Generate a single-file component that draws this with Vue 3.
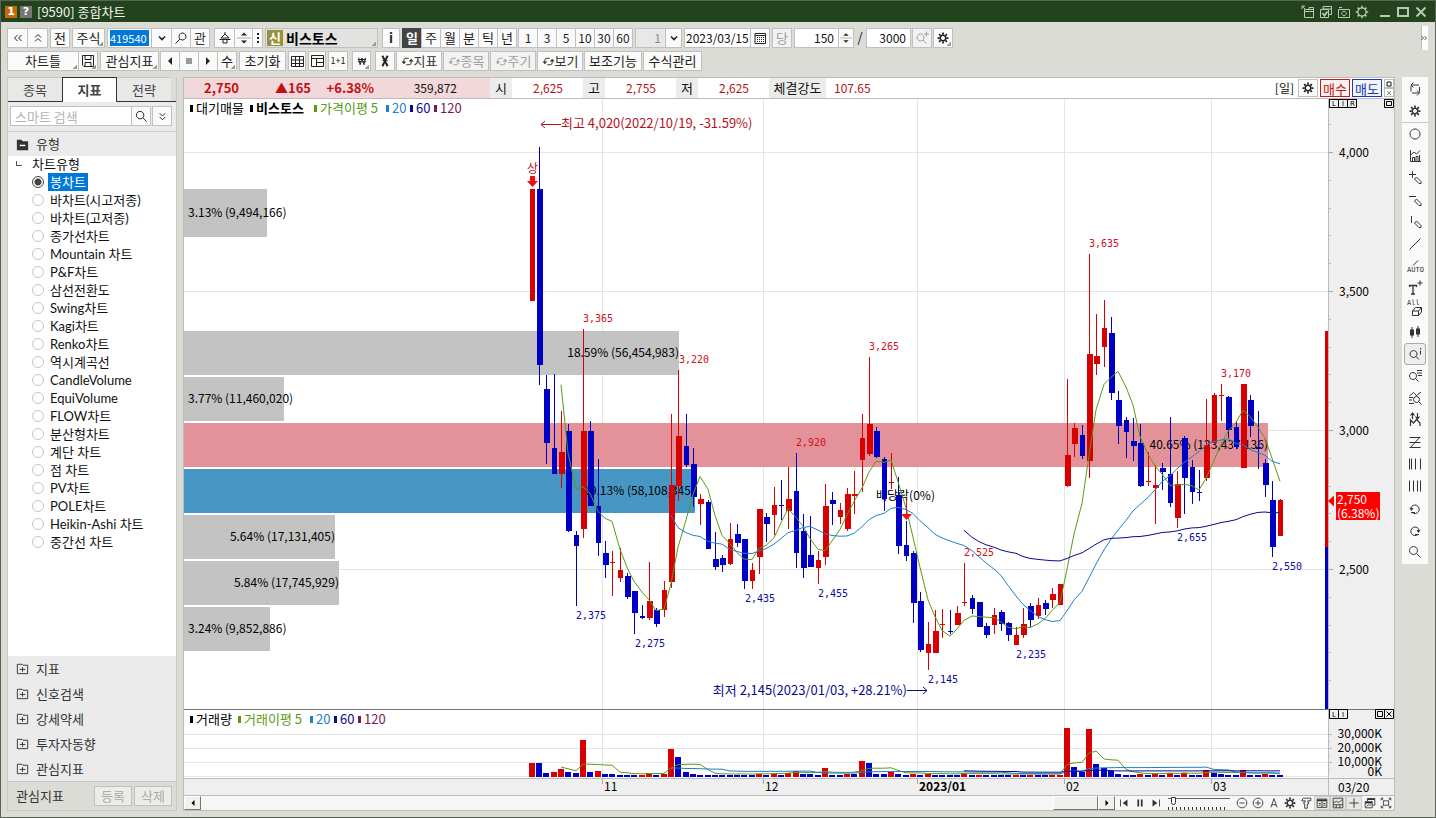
<script setup>
import { h, ref } from 'vue'

const gearTeeth = 'M8 1.8v2.4M8 11.8v2.4M1.8 8h2.4M11.8 8h2.4M3.6 3.6l1.7 1.7M10.7 10.7l1.7 1.7M3.6 12.4l1.7-1.7M10.7 5.3l1.7-1.7'
const gearRing = 'M8 4.8a3.2 3.2 0 1 0 .01 0z'

const shapes = {
  gear: [{ d: gearTeeth, w: 2 }, { d: gearRing, w: 1.8 }],
  thinGear: [{ d: gearTeeth, w: 1.6 }, { d: 'M8 3.8a4.2 4.2 0 1 0 .01 0z', w: 1.2 }],
  dblLeft: [{ d: 'M7.5 5L4.5 8l3 3M11.5 5l-3 3 3 3' }],
  dblUp: [{ d: 'M5 7.5l3-3 3 3M5 11.5l3-3 3 3' }],
  dblDown: [{ d: 'M5 4.5l3 3 3-3M5 8.5l3 3 3-3' }],
  dblRight: [{ d: 'M3.5 5.5L6 8l-2.500 2.500M7.500 5.500L10 8l-2.500 2.500' }],
  down: [{ d: 'M5 6.500l3 3 3-3', w: 1.6 }],
  find: [{ d: 'M9.500 3a3.500 3.500 0 1 0 .01 0zM7 9l-4.500 4.500' }],
  lens: [{ d: 'M6.500 2.500a4 4 0 1 0 .01 0zM9.500 9.500l4 4' }],
  lensPlus: [{ d: 'M6.500 4a3.500 3.500 0 1 0 .01 0zM9 10l3.500 3.500M10 4h5M12.500 1.500v5' }],
  lensInfo: [{ d: 'M6.500 4.500a3.500 3.500 0 1 0 .01 0zM9 10.500l3 3M13.500 4.500v4' }, { d: 'M13 2h1.200v1.200H13z', f: 1 }],
  lensList: [{ d: 'M6 4.500a3.500 3.500 0 1 0 .01 0zM8.500 10.500l3 3M10 2.500h5M10 5h5M11 7.500h4' }],
  hat: [{ d: 'M8 2v2M8 4L4 8h8L8 4M2.500 9.500h11M6 10v3h4v-3' }],
  upDown: [{ d: 'M1 8h14', w: 1, c: '#aaa' }, { d: 'M5 5.500h6L8 2.500zM5 10.500h6l-3 3z', f: 1 }],
  dots: [{ d: 'M7 3h2v2H7zM7 7h2v2H7zM7 11h2v2H7z', f: 1 }],
  calendar: [{ d: 'M3 3.500h10.500v10H3zM3 5.500h10.500' }, { d: 'M5 7.500h7M5 9.500h7M5 11.500h7', dash: '1 1' }],
  disk: [{ d: 'M2.500 2.500h11v11H4l-1.500-1.500zM5 2.500v4h6v-4M5 13.500v-4h6v4' }],
  left: [{ d: 'M10 4v8L6 8z', f: 1 }],
  right: [{ d: 'M6 4v8l4-4z', f: 1 }],
  stop: [{ d: 'M5 5h6v6H5z', f: 1, c: '#999' }],
  grid: [{ d: 'M2.500 3.500h12v10h-12zM2.500 7h12M2.500 10.500h12M6.500 3.500v10M10.500 3.500v10' }],
  panes: [{ d: 'M2.500 2.500h12v11h-12zM2.500 5.500h12M7.500 5.500v8M7.500 9.500h7' }],
  won: [{ d: 'M3.500 3.500L5.500 13 8 4l2.500 9 2-9.500M2.500 6h11M2.500 9h11', w: 1.3 }],
  shears: [{ d: 'M5 2l6 12M11 2L5 14', w: 2.2 }, { d: 'M5 7.500h6', w: 1 }],
  sync: [{ d: 'M3.500 9V6.500a2.500 2.500 0 0 1 2.500-2.500h3.500M12.500 7v2.500A2.500 2.500 0 0 1 10 12H6.500', w: 1.2 }, { d: 'M.5 8h6l-3 3.500zM9.500 8h6l-3-3.500z', f: 1 }],
  pop: [{ d: 'M4.500 5.500h9v8h-9zM4.500 7.500h9M2 2l4 4M2 5V2h3M9 5.500v-2h4.500v2' }],
  cards: [{ d: 'M2.500 5.500h8v8h-8zM5 5.500v-3h8.500v8H11M5.500 2.500h8M5 5h8' }, { d: 'M4.500 9l2 2.500 3-4', w: 1.800 }],
  camera: [{ d: 'M2.500 5.500h11v8h-11zM3 3.500h3M8 7.300a2.200 2.200 0 1 0 .01 0z' }],
  min: [{ d: 'M3 12h10', w: 2 }],
  max: [{ d: 'M3 4h10v8H3z', w: 2 }],
  close: [{ d: 'M3.500 3.500l9 9M12.500 3.500l-9 9', w: 2 }],
  rotate: [{ d: 'M4 10.500V5.500a1.500 1.500 0 0 1 1.500-1.500H12M6.500 1.500L4 4l2.500 2.500M12.500 6v4.500A1.500 1.500 0 0 1 11 12H5M10 9.500l2.500 2.500-2.500 2.500' }],
  circle: [{ d: 'M8 3a5 5 0 1 0 .01 0z' }],
  chart: [{ d: 'M3.500 2v11.500H14M3.500 7l3.500-3 2.500 2L13 2.500M5.500 13.500V9.500h2v4M9 13.500v-5h2v5M12.500 13.500V7' }],
  penPlus: [{ d: 'M5.500 1v7M2 4.500h7M7.500 9l2-2 4.500 4.500v2h-2z' }],
  penMinus: [{ d: 'M2 4.500h7M7.500 9l2-2 4.500 4.500v2h-2z' }],
  penBar: [{ d: 'M4.500 2v7M7.500 9l2-2 4.500 4.500v2h-2z' }],
  line: [{ d: 'M2.500 13.500l11-11' }],
  autoLine: [{ d: 'M6 7.500l5-5' }],
  textPlus: [{ d: 'M2 5.500h8M6 5.500V14M4 14h4M2.500 5v2M9.500 5v2', w: 1.300 }, { d: 'M10.500 3h5M13 .5v5' }],
  eraser: [{ d: 'M5.500 9l3-3.500h6l-3 3.500zM5.500 9v4.500h6V9M11.500 13.500l3-3.500V5.500' }],
  candles: [{ d: 'M3 5.500h4v6H3zM9 4.500h4v6H9z', f: 1 }, { d: 'M5 3v11M11 2v11' }],
  chartLens: [{ d: 'M2.500 6l4-3.500 3 3L14 2M2 7.500h4M2 10h3M2 13.500h5M9.500 6.500a3 3 0 1 0 .01 0zM11.500 11.500l3 3' }],
  zigzag: [{ d: 'M3.500 14V8l3 3 3-3.500 3.500 3.500V14M5.500 1v6M3.500 3.500l2-2.500 2 2.500M10.500 1v6M8.500 4.500l2 2.500 2-2.500', w: 1.200 }],
  zee: [{ d: 'M2.500 3.500h11M2.500 8.500h11M2.500 13.500h11M12.500 3.500l-9 10' }],
  bars: [{ d: 'M2.500 2.500v11M4.500 2.500v11M8.500 2.500v11M13.500 2.500v11' }],
  barsEven: [{ d: 'M2.500 2.500v11M6.500 2.500v11M10.500 2.500v11M13.500 2.500v11' }],
  undo: [{ d: 'M5 12.500a4.300 4.300 0 1 0-1.200-4.500M8 12.500H4' }, { d: 'M2.500 8h4l-2 3z', f: 1 }],
  redo: [{ d: 'M11 12.500a4.300 4.300 0 1 1 1.200-4.500M8 12.500h4' }, { d: 'M9.500 8h4l-2 3z', f: 1 }],
  first: [{ d: 'M4 4v8' }, { d: 'M12 4v8L6.500 8z', f: 1 }],
  pause: [{ d: 'M6 4v8M10 4v8', w: 2 }],
  last: [{ d: 'M12 4v8' }, { d: 'M4 4v8l5.500-4z', f: 1 }],
  zoomOut: [{ d: 'M8 2.500a5.500 5.500 0 1 0 .01 0zM5 8h6' }],
  zoomIn: [{ d: 'M8 2.500a5.500 5.500 0 1 0 .01 0zM5 8h6M8 5v6' }],
  compass: [{ d: 'M4.500 13L8 3l3.500 10M5.500 10h5' }],
  hammer: [{ d: 'M3 5.500l2-3h8.500v3H10V7h1v2H9.500v5h-3V9H5.500V7H7V5.500z' }],
  table: [{ d: 'M2.500 3.500h11v9.500h-11z' }, { d: 'M2.500 5h11', w: 2 }, { d: 'M8 5v8M4.500 8.500h2M9.500 8.500h2.500M4.500 10.500h2M9.500 10.500h2.500' }],
  tile: [{ d: 'M2.500 2.500h11v11h-11zM3 8l3-2 3 1.500L13 4M2.500 10h11M6 10v3.500M10 10v3.500' }],
  plus: [{ d: 'M8 2.500v11M2.500 8h11' }],
  stack: [{ d: 'M2.500 6.500h8v7h-8zM5 6V3h8.500v7.500H11' }, { d: 'M2.500 7.500h8M5 3.500h8.500', w: 2 }, { d: 'M4 12l2-2 1.500 1 2-1.500' }],
  fit: [{ d: 'M5 5.500h6v5H5zM2.500 5V2.500H5M11 2.500h2.500V5M13.500 11v2.500H11M5 13.500H2.500V11M3 3l2 2M13 3l-2 2M3 13l2-2M13 13l-2-2' }],
  folderOpen: [{ d: 'M2 3h5l1 1.500h6V14H2z', f: 1 }, { d: 'M5 9h6', w: 1.500, c: '#fff' }],
  folder: [{ d: 'M2.500 3.500h5l1 1h5v9h-11zM5 9h6M8 6.500v5' }],
  box: [{ d: 'M4 4h8v8H4z', w: 2 }],
  cross: [{ d: 'M4 4l8 8M12 4l-8 8' }]
}

const Ic = (p) =>
  h('svg', { width: p.s || 16, height: p.s || 16, viewBox: '0 0 16 16', 'aria-hidden': 'true', style: 'display:block;flex:none' },
    shapes[p.n].map((x) =>
      h('path', x.f
        ? { d: x.d, fill: x.c || 'currentColor' }
        : { d: x.d, fill: 'none', stroke: x.c || 'currentColor', 'stroke-width': x.w || 1, 'stroke-dasharray': x.dash })))
Ic.props = ['n', 's']

const chartTypes = ['봉차트', '바차트(시고저종)', '바차트(고저종)', '종가선차트', 'Mountain 차트', 'P&F차트', '삼선전환도', 'Swing차트', 'Kagi차트', 'Renko차트', '역시계곡선', 'CandleVolume', 'EquiVolume', 'FLOW차트', '분산형차트', '계단 차트', '점 차트', 'PV차트', 'POLE차트', 'Heikin-Ashi 차트', '중간선 차트']
const chosen = ref('봉차트')
const folders = ['지표', '신호검색', '강세약세', '투자자동향', '관심지표']
const periods = ['일', '주', '월', '분', '틱', '년']
const minutes = ['1', '3', '5', '10', '30', '60']
const code = ref('419540')
const barCount = ref('150')
const maxCount = ref('3000')
const date = ref('2023/03/15')

const sideTools = ['circle', 'chart', 'penPlus', 'penMinus', 'penBar', 'line', 'autoLine', 'textPlus', 'eraser', 'candles', 'lensInfo', 'lensList', 'chartLens', 'zigzag', 'zee', 'bars', 'barsEven', 'undo', 'redo', 'lens']
const sideText = { autoLine: 'AUTO', eraser: 'All' }
const footTools = ['zoomOut', 'zoomIn', 'compass', 'gear', 'hammer', 'table', 'tile', 'plus', 'stack', 'fit']
const footOn = ['table', 'tile', 'plus']

// direction, high, low, body top, body bottom
const raw = `r 189 301 189 301|b 147 385 189 365|b 375 464 389 443|b 374 474 448 474|r 411 488 452 474|b 424 532 431 531|b 531 606 535 546|r 329 538 431 529|b 421 506 431 506|b 459 556 506 543
b 541 578 553 565|r 551 596 562 563|r 548 582 570 578|b 573 599 576 597|b 591 634 591 613|b 605 619 616 618|r 562 620 601 618|b 608 627 610 624|r 581 617 590 610|r 414 588 485 582
r 370 501 436 486|b 414 467 446 465|b 448 507 464 497|r 494 525 499 504|b 500 549 502 549|b 532 570 559 567|b 555 572 558 565|r 523 565 539 564|b 524 547 534 543|b 539 589 539 581
r 563 589 570 581|r 509 574 509 557|b 513 542 517 524|r 487 535 505 515|b 480 520 505 506|r 467 529 499 511|b 453 568 491 553|b 514 578 531 568|b 516 567 555 567|r 551 584 560 568
r 484 565 506 557|b 492 525 500 504|r 503 524 510 517|r 488 531 494 529|r 471 514 494 496|r 414 492 438 460|r 357 456 424 454|b 427 458 431 457|b 457 511 459 499|r 453 489 482 483
b 477 554 495 546|b 521 561 545 556|b 551 623 553 603|b 592 652 601 650|r 622 670 644 653|r 610 653 631 653|r 609 638 624 625|b 610 634 631 632|r 606 625 613 625|r 563 606 602 603
b 595 614 598 609|b 602 627 602 627|b 623 638 626 635|r 608 634 615 625|b 610 631 612 624|b 622 641 623 635|r 627 645 635 645|r 608 638 624 635|b 603 627 606 620|r 598 619 605 616
b 600 615 603 609|r 588 608 594 600|r 584 605 584 605|r 379 487 455 486|r 423 457 428 444|b 425 459 435 456|r 254 478 354 461|r 314 375 356 364|r 300 367 328 347|b 317 400 333 393
b 391 444 400 426|b 417 458 420 432|b 418 461 441 446|b 424 487 443 486|r 452 486 481 482|r 465 524 485 488|b 463 490 468 472|b 417 507 474 503|r 471 528 484 518|b 436 514 438 478
b 460 504 467 492|b 470 501 492 493|r 399 481 445 478|r 393 443 395 443|r 384 421 395 396|b 396 438 397 430|b 421 449 427 447|r 384 468 384 468|b 395 437 400 426|b 411 469 447 449
b 459 497 463 485|b 481 557 500 547|r 499 536 500 536`
const volume = [14, 13.9, 4, 5, 8, 5, 4, 37, 5, 6, 3, 3, 2, 2, 2, 2.1, 4, 2, 3, 28, 20, 5, 3, 2, 2, 2, 2, 2, 2, 2, 2, 3, 2, 3, 2, 4, 6, 3, 3, 2, 9, 2, 2, 3, 3, 16, 14, 3, 3, 5, 3, 2, 3, 2, 3, 2, 2, 2, 2, 4, 2, 2.1, 2, 2, 2, 2, 2.1, 2, 2.1, 2, 2, 2.1, 2.2, 49, 10, 5, 48, 13, 9, 6, 3, 2, 2, 3, 2, 3, 2, 4, 2, 4, 2, 2, 7, 4, 3, 2, 2, 7, 2, 2, 3, 2, 2]

const step = 748 / 102
const xAt = (i) => Math.floor(532.3 + i * step)
const red = '#d80000'
const blue = '#0000c4'
const candles = raw.split(/[|\n]/).map((t, i) => {
  const [dir, ...n] = t.trim().split(' ')
  const [high, low, top, bottom] = n.map(Number)
  return { x: xAt(i), high, low, top, bottom, color: dir === 'r' ? red : blue, close: dir === 'r' ? top : bottom }
})
const volumes = volume.map((v, i) => ({ x: xAt(i), v: Math.round(v), color: i && v <= volume[i - 1] ? blue : red }))

const average = (values, n) => {
  const pts = []
  for (let i = n - 1; i < values.length; i++) {
    const sum = values.slice(i - n + 1, i + 1).reduce((a, b) => a + b, 0)
    pts.push(`${xAt(i)},${(sum / n).toFixed(1)}`)
  }
  return pts.join(' ')
}
const lineColors = { 5: '#5a9a14', 20: '#2080c8', 60: '#0a0a90' }
const closes = candles.map((c) => c.close)
const volTops = volume.map((v) => 776 - v)
const priceLines = [5, 20, 60].map((n) => ({ color: lineColors[n], points: average(closes, n) }))
const volLines = [5, 20, 60].map((n) => ({ color: lineColors[n], points: average(volTops, n) }))

const profile = [
  { y: 189, h: 48, end: 267, text: '3.13% (9,494,166)' },
  { y: 331, h: 44, end: 679, text: '18.59% (56,454,983)' },
  { y: 377, h: 44, end: 284, text: '3.77% (11,460,020)' },
  { y: 423, h: 44, end: 1268, text: '40.65% (123,437,136)', color: '#e49299' },
  { y: 469, h: 44, end: 695, text: '19.13% (58,108,345)', color: '#4797c5' },
  { y: 515, h: 44, end: 335, text: '5.64% (17,131,405)' },
  { y: 561, h: 44, end: 339, text: '5.84% (17,745,929)' },
  { y: 607, h: 44, end: 270, text: '3.24% (9,852,886)' }
]
const peaks = [[583, 322, '3,365'], [679, 363, '3,220'], [796, 446, '2,920'], [869, 350, '3,265'], [964, 556, '2,525'], [1089, 247, '3,635'], [1221, 377, '3,170']]
const troughs = [[576, 619, '2,375'], [635, 647, '2,275'], [745, 602, '2,435'], [818, 597, '2,455'], [928, 683, '2,145'], [1016, 658, '2,235'], [1177, 541, '2,655'], [1272, 570, '2,550']]
const months = [[602, '11'], [763, '12'], [917, '2023/01', true], [1064, '02'], [1211, '03']]
const levels = [[152, '4,000'], [291, '3,500'], [430, '3,000'], [569, '2,500']]
const minor = Array.from({ length: 21 }, (_, i) => Math.round(152 + (i - 1) * 27.8))
const legendTop = [[190, '대기매물', '#000'], [250, '비스토스', '#000', true], [314, '가격이평  5', '#5a9a14'], [386, '20', '#2080c8'], [410, '60', '#0a0a90'], [434, '120', '#7a1a50']]
const legendVol = [[190, '거래량', '#000'], [238, '거래이평  5', '#5a9a14'], [310, '20', '#2080c8'], [334, '60', '#0a0a90'], [358, '120', '#7a1a50']]
</script>

<template>
  <div class="window">
    <header class="title">
      <span class="badge orange">1</span><span class="badge grey">?</span>
      <h1>[9590] 종합차트</h1>
      <div class="title-tools">
        <button v-for="n in ['pop', 'cards', 'camera', 'thinGear']" :key="n" :aria-label="n"><Ic :n="n" /></button>
        <span class="gap"></span>
        <button v-for="n in ['min', 'max', 'close']" :key="n" :aria-label="n"><Ic :n="n" /></button>
      </div>
    </header>

    <div class="bars">
      <div class="row">
        <div class="group"><button class="b w21" aria-label="이전"><Ic n="dblLeft" /></button><button class="b w21" aria-label="위로"><Ic n="dblUp" /></button></div>
        <button class="b w20 s1">전</button>
        <button class="b w33 s1 corner">주식</button>
        <div class="group s1">
          <div class="field w45"><input v-model="code" class="code" aria-label="종목코드"></div>
          <button class="b w21" aria-label="목록"><Ic n="down" /></button>
          <button class="b w20" aria-label="찾기"><Ic n="find" /></button>
          <button class="b w20 dim">관</button>
        </div>
        <div class="group s3">
          <button class="b w21" aria-label="상하"><Ic n="hat" /></button>
          <button class="b w19" aria-label="이동"><Ic n="upDown" /></button>
          <button class="b w11" aria-label="더보기"><Ic n="dots" /></button>
        </div>
        <button class="b stock s1 corner"><span class="olive">신</span><strong>비스토스</strong></button>
        <button class="b w18 s3"><b>i</b></button>
        <div class="group s1"><button v-for="(p, i) in periods" :key="p" class="b w20" :class="{ dark: i === 0 }">{{ p }}</button></div>
        <div class="group"><button v-for="m in minutes" :key="m" class="b w20 n12">{{ m }}</button></div>
        <div class="group s1">
          <div class="field w31 off"><input value="1" class="num" aria-label="간격"></div>
          <button class="b w17" aria-label="간격 목록"><Ic n="down" /></button>
        </div>
        <div class="group s1">
          <div class="field w67 date"><input v-model="date" aria-label="날짜"></div>
          <button class="b w20" aria-label="달력"><Ic n="calendar" /></button>
        </div>
        <button class="b w20 s1 pale">당</button>
        <div class="group s1">
          <div class="field w45"><input v-model="barCount" class="num" aria-label="봉 개수"></div>
          <button class="b w16" aria-label="증감"><Ic n="upDown" s="14" /></button>
        </div>
        <span class="slash">/</span>
        <div class="field w45"><input v-model="maxCount" class="num" aria-label="최대 개수"></div>
        <button class="b w20 pale" aria-label="확대"><Ic n="lensPlus" /></button>
        <button class="b w20 corner" aria-label="설정"><Ic n="gear" s="14" /></button>
      </div>
      <div class="row">
        <div class="group"><button class="b w72 corner">차트틀</button><button class="b w20 corner" aria-label="저장"><Ic n="disk" /></button></div>
        <button class="b w59 s1 corner">관심지표</button>
        <div class="group">
          <button class="b w20" aria-label="뒤로"><Ic n="left" /></button><button class="b w20" aria-label="정지"><Ic n="stop" /></button>
          <button class="b w20" aria-label="앞으로"><Ic n="right" /></button><button class="b w20 corner">수</button>
        </div>
        <button class="b w47 s1">초기화</button>
        <button class="b w18 s1" aria-label="격자"><Ic n="grid" /></button>
        <button class="b w18 s1" aria-label="분할"><Ic n="panes" /></button>
        <button class="b w20 s1 tiny">1+1</button>
        <button class="b w19 s3 corner" aria-label="원화"><Ic n="won" s="12" /></button>
        <button class="b w20 s3" aria-label="자르기"><Ic n="shears" s="14" /></button>
        <button class="b w46 dim"><Ic n="sync" s="13" />지표</button>
        <button class="b w46 pale"><Ic n="sync" s="13" />종목</button>
        <button class="b w46 pale"><Ic n="sync" s="13" />주기</button>
        <button class="b w46 dim"><Ic n="sync" s="13" />보기</button>
        <button class="b w58">보조기능</button>
        <button class="b w59">수식관리</button>
      </div>
      <button class="handle" aria-label="더보기"><Ic n="dblRight" s="12" /></button>
    </div>

    <main>
      <aside>
        <nav class="tabs"><button>종목</button><button class="on">지표</button><button>전략</button></nav>
        <div class="search">
          <input type="text" placeholder="스마트 검색" aria-label="스마트 검색">
          <button class="b w20" aria-label="검색"><Ic n="lens" s="15" /></button>
          <button class="b w20 s1" aria-label="펼치기"><Ic n="dblDown" s="15" /></button>
        </div>
        <h2><Ic n="folderOpen" s="15" />유형</h2>
        <div class="tree">
          <p>차트유형</p>
          <label v-for="t in chartTypes" :key="t"><input v-model="chosen" type="radio" name="type" :value="t"><span>{{ t }}</span></label>
        </div>
        <button v-for="f in folders" :key="f" class="folder"><Ic n="folder" s="15" />{{ f }}</button>
        <div class="foot"><span>관심지표</span><button class="b">등록</button><button class="b">삭제</button></div>
      </aside>

      <section class="chart">
        <div class="quote">
          <div class="last"><b>2,750</b><b>▲165</b><b>+6.38%</b><span>359,872</span></div>
          <span class="tag">시</span><em>2,625</em>
          <span class="tag">고</span><em>2,755</em>
          <span class="tag">저</span><em>2,625</em>
          <span class="tag wide">체결강도</span><em class="first">107.65</em>
          <div class="quote-right">
            <span>[일]</span>
            <button class="b w20" aria-label="설정"><Ic n="gear" s="14" /></button>
            <button class="trade buy">매수</button>
            <button class="trade sell">매도</button>
            <div class="mini"><button aria-label="최대"><Ic n="box" s="8" /></button><button aria-label="닫기"><Ic n="cross" s="8" /></button></div>
          </div>
        </div>

        <div class="canvas">
          <svg class="plot" viewBox="184 99 1144 696" preserveAspectRatio="xMinYMin meet" role="img" aria-label="비스토스 일봉 차트">
            <rect x="184" y="779" width="1144" height="16" fill="#efefef" />
            <g stroke="#e4e4e4">
              <path v-for="m in months" :key="m[0]" :d="`M${m[0] + 0.5} 99V778`" />
              <path v-for="l in levels" :key="l[0]" :d="`M184 ${l[0] + 0.5}H1328`" />
              <path d="M184 734.500H1328M184 748.500H1328M184 762.500H1328M184 776.500H1328" />
            </g>
            <g class="t">
              <g v-for="p in profile" :key="p.y">
                <rect x="184" :y="p.y" :width="p.end - 184" :height="p.h" :fill="p.color || '#c3c3c3'" />
                <text :x="p.end - 184 < 110 ? 188 : p.end" :y="p.y + p.h / 2 + 4" :text-anchor="p.end - 184 < 110 ? 'start' : 'end'">{{ p.text }}</text>
              </g>
              <text x="876" y="500">배당락(0%)</text>
            </g>
            <g v-for="(c, i) in candles" :key="i" :fill="c.color">
              <rect :x="c.x" :y="c.high" width="1" :height="c.low - c.high" />
              <rect :x="c.x - 2" :y="c.top" :width="c.bottom - c.top < 2 ? 5 : i % 3 ? 6 : 5" :height="c.bottom - c.top" />
            </g>
            <rect v-for="(v, i) in volumes" :key="'v' + i" :x="v.x - 3" :y="777 - v.v" width="6" :height="v.v" :fill="v.color" />
            <g fill="none" stroke-width="1">
              <polyline v-for="l in priceLines" :key="l.color" :points="l.points" :stroke="l.color" />
              <polyline v-for="l in volLines" :key="l.color" :points="l.points" :stroke="l.color" />
            </g>
            <path d="M530 176h5v5h3l-5.500 6-5.500-6h3zM906 501h1v13h5l-5.500 6-5.500-6h5z" fill="#f01010" />
            <g fill="none" stroke="#b01020"><path d="M541 124.500h20M545 121l-4 3.500 4 3.500" /><path d="M907 690.500h20M923 687l4 3.500-4 3.500" stroke="#0a0a90" /></g>
            <g class="t" fill="#b81020"><text x="561" y="128" class="t13">최고 4,020(2022/10/19, -31.59%)</text><text x="527" y="173">상</text></g>
            <text x="907" y="695" text-anchor="end" class="t t13" fill="#0a0a90">최저 2,145(2023/01/03, +28.21%)</text>
            <g class="m" fill="#d01020"><text v-for="p in peaks" :key="p[0]" :x="p[0]" :y="p[1]">{{ p[2] }}</text></g>
            <g class="m" fill="#0a0aa8"><text v-for="p in troughs" :key="p[0]" :x="p[0]" :y="p[1]">{{ p[2] }}</text></g>
            <rect x="1325" y="331" width="3" height="216" :fill="red" /><rect x="1325" y="547" width="3" height="162" :fill="blue" />
            <path d="M184 709.500H1328" stroke="#777" /><path d="M184 778.500H1328" stroke="#bbb" />
            <g class="t">
              <g v-for="l in legendTop" :key="l[0]" :fill="l[2]"><rect :x="l[0]" y="105" width="3" height="7" /><text :x="l[0] + 6" y="113" class="t13" :class="{ bold: l[3] }" xml:space="preserve">{{ l[1] }}</text></g>
              <g v-for="l in legendVol" :key="'b' + l[0]" :fill="l[2]"><rect :x="l[0]" y="716" width="3" height="7" /><text :x="l[0] + 6" y="724" class="t13" xml:space="preserve">{{ l[1] }}</text></g>
              <g v-for="m in months" :key="'m' + m[0]"><path :d="`M${m[0] + 0.5} 779v5`" stroke="#aaa" /><text :x="m[0] + 2" y="791" :class="{ bold: m[2] }">{{ m[1] }}</text></g>
            </g>
          </svg>
          <svg class="axis" viewBox="1328 99 66 696" preserveAspectRatio="xMinYMin meet" aria-label="가격 축">
            <path d="M1328.500 99V795" stroke="#bbb" /><path d="M1328 709.500h66" stroke="#777" /><path d="M1328 778.500h66" stroke="#bbb" />
            <path v-for="y in minor" :key="y" :d="`M1328 ${y + 0.5}h3`" stroke="#bbb" />
            <path d="M1328 734.500h4M1328 741.500h2M1328 748.500h4M1328 755.500h2M1328 762.500h4M1328 769.500h2" stroke="#bbb" />
            <g class="t">
              <g v-for="l in levels" :key="l[0]"><path :d="`M1328 ${l[0] + 0.5}h5`" stroke="#aaa" /><text x="1339" :y="l[0] + 5">{{ l[1] }}</text></g>
              <text x="1382" y="738" text-anchor="end">30,000K</text><text x="1382" y="752" text-anchor="end">20,000K</text>
              <text x="1382" y="766" text-anchor="end">10,000K</text><text x="1382" y="776" text-anchor="end">0K</text>
              <text x="1338" y="792">03/20</text>
              <path d="M1328 501l6-5.500v11z" fill="red" /><rect x="1336" y="492" width="44" height="28" fill="red" />
              <g fill="#fff"><text x="1337" y="504">2,750</text><text x="1337" y="518">(6.38%)</text></g>
            </g>
            <g fill="none" stroke="#000"><path d="M1329.500 99v8.500h27V99M1338.500 99v8M1347.500 99v8M1329 99.500h28M1384.500 99.500h9v8h-9zM1386.500 101.500h5v4h-5z" />
              <path d="M1329.500 709.500h18v9h-18zM1338.500 710v8M1375.500 709.500h18v9h-18zM1384.500 710v8M1377.500 711.500h5v5h-5zM1386.500 711.500l5 5M1391.500 711.500l-5 5" /></g>
            <g class="mini-t"><text x="1332" y="106">L</text><text x="1342" y="106">I</text><text x="1350" y="106">R</text><text x="1332" y="717">L</text><text x="1342" y="717">I</text></g>
          </svg>
        </div>

        <div class="scroll">
          <button class="raised" aria-label="왼쪽"><Ic n="left" s="12" /></button>
          <div class="track"><div class="thumb"></div></div>
          <button class="raised" aria-label="오른쪽"><Ic n="right" s="12" /></button>
          <div class="play"><button v-for="n in ['first', 'pause', 'last']" :key="n" :aria-label="n"><Ic :n="n" s="14" /></button></div>
          <div class="slide"><input type="range" min="0" max="100" value="6" aria-label="속도"></div>
          <div class="play zoom"><button v-for="n in footTools" :key="n" :aria-label="n" :class="{ lit: footOn.includes(n) }"><Ic :n="n" s="14" /></button></div>
        </div>
      </section>

      <div class="side">
        <button aria-label="회전"><Ic n="rotate" /></button><button aria-label="설정"><Ic n="gear" s="14" /></button>
        <hr>
        <button v-for="n in sideTools" :key="n" :aria-label="n" :class="[{ active: n === 'lensInfo' }, 'k-' + n]"><small v-if="sideText[n]">{{ sideText[n] }}</small><Ic :n="n" /></button>
      </div>
    </main>
  </div>
</template>

<style>
body { margin: 0; }
</style>

<style scoped>
* { box-sizing: border-box; }
.window { display: flex; flex-direction: column; min-height: 100vh; background: #dcdcd7; border: 1px solid #5c625a; font: 13px/18px "Noto Sans CJK KR", "Noto Sans", sans-serif; color: #111; }
button, input { font: inherit; color: inherit; padding: 0; margin: 0; border: 0; background: none; border-radius: 0; }
.title { display: flex; align-items: center; height: 21px; background: #23431d; color: #f2f2f2; padding: 0 6px 0 4px; gap: 3px; }
.title h1 { font-size: 13px; font-weight: 400; margin: 0 auto 0 2px; }
.badge { width: 12px; height: 12px; font: bold 11px/12px "DejaVu Sans", sans-serif; text-align: center; color: #fff; }
.orange { background: #c66a08; }
.grey { background: #777; }
.title-tools { display: flex; gap: 2px; color: #b9c8b4; }
.title-tools .gap { width: 3px; }
.bars { position: relative; display: flex; flex-direction: column; gap: 3px; padding: 6px 6px 0; }
.row { display: flex; gap: 1px; }
.group { display: flex; }
.group > * + * { margin-left: -1px; }
.b { position: relative; display: flex; align-items: center; justify-content: center; flex: none; height: 20px; border: 1px solid #c0c0be; background: #fafafa; white-space: nowrap; overflow: hidden; color: #222; }
.n12 { font-size: 12px; }
.field { height: 20px; border: 1px solid #c0c0be; background: #fff; padding: 1px 2px; overflow: hidden; }
.field input { display: block; width: 100%; height: 16px; font-size: 12px; }
.field .code { background: #0078d7; color: #fff; width: 39px; font-size: 11px; }
.date { padding: 1px 0 1px 1px; }
.field .num { text-align: right; padding-right: 2px; }
.off { background: #e8e8e8; color: #888; }
.corner::after { content: ""; position: absolute; right: 1px; bottom: 1px; width: 4px; height: 4px; background: linear-gradient(135deg, transparent 50%, #999 50%); }
.dim { color: #333; }
.pale { color: #a0a0a0; background: #f2f2f2; }
.dark { background: #444; color: #fff; border-color: #444; font-weight: 700; }
.tiny { font-size: 9px; }
.stock { width: 113px; justify-content: flex-start; padding-left: 1px; gap: 3px; background: #e2e2e0; }
.olive { width: 16px; height: 16px; line-height: 15px; background: #96923a; color: #fff; font-weight: 700; }
.stock strong { font-size: 14px; color: #000; }
.slash { width: 10px; text-align: center; }
.handle { position: absolute; right: 7px; top: 4px; width: 7px; height: 24px; border-left: 1px solid #bbb; background: #fff; display: flex; align-items: center; justify-content: center; }
.w11 { width: 11px; } .w16 { width: 16px; } .w17 { width: 17px; } .w18 { width: 18px; } .w19 { width: 19px; } .w20 { width: 20px; } .w21 { width: 21px; }
.w31 { width: 31px; } .w33 { width: 33px; } .w45 { width: 45px; } .w46 { width: 46px; } .w47 { width: 47px; } .w58 { width: 58px; } .w59 { width: 59px; } .w67 { width: 67px; } .w72 { width: 72px; }
.s1 { margin-left: 1px; } .s3 { margin-left: 3px; }
main { flex: 1; display: flex; margin: 6px 7px 6px 6px; min-height: 0; align-items: stretch; }
aside { flex: none; width: 170px; margin-right: 6px; display: flex; flex-direction: column; background: #ebebeb; border: solid #c8c8c6; border-width: 0 1px 1px; }
.tabs { display: flex; height: 25px; background: #dcdcd7; border-bottom: 1px solid #333; }
.tabs button { width: 54px; height: 24px; background: #e8e8e6; border-top: 1px solid #c4c4c2; color: #444; }
.tabs .on { width: 55px; height: 25px; background: #fff; border: 1px solid #333; border-bottom: 0; font-weight: 700; }
.search { display: flex; height: 29px; padding: 4px 2px; }
.search input { width: 122px; height: 20px; margin-right: -1px; border: 1px solid #c0c0be; background: #fff; padding: 0 4px; }
.search input::placeholder { color: #b4b4b4; opacity: 1; }
h2 { display: flex; align-items: center; gap: 6px; height: 25px; margin: 0; padding-left: 7px; font-size: 13px; font-weight: 400; color: #333; border-top: 1px solid #d0d0ce; }
.tree { flex: 1; background: #fff; font-family: Lato, "Noto Sans CJK KR", sans-serif; }
.tree p { margin: -1px 0 0; height: 18px; padding-left: 24px; position: relative; }
.tree p::before { content: ""; position: absolute; left: 8px; top: 6px; width: 5px; height: 4px; border: solid #555; border-width: 0 0 1px 1px; }
.tree label { display: flex; align-items: center; height: 18px; padding-left: 24px; gap: 4px; }
.tree label span { padding: 0 2px; height: 18px; line-height: 18px; }
.tree input { appearance: none; width: 12px; height: 12px; border: 1px solid #c4c4c4; border-radius: 50%; background: #fff; }
.tree input:checked { border-color: #444; background: radial-gradient(circle, #444 3px, #fff 4px); }
.tree input:checked + span { background: #0078d7; color: #fff; }
.folder { display: flex; align-items: center; gap: 6px; height: 25px; padding-left: 7px; color: #333; }
.foot { display: flex; align-items: center; height: 29px; padding: 0 4px 0 8px; gap: 2px; background: #dcdcd7; border-top: 1px solid #c8c8c6; color: #333; }
.foot span { margin-right: auto; }
.foot .b { width: 38px; background: #ececea; color: #aaa; }
.chart { flex: 1; min-width: 0; display: flex; flex-direction: column; border: 1px solid #bbb; background: #fff; }
.quote { display: flex; align-items: center; height: 21px; border-bottom: 1px solid #bbb; font-size: 12px; }
.last { display: grid; grid-template-columns: 55px 72px 63px 83px; width: 306px; height: 20px; line-height: 20px; background: #f2d8da; text-align: right; }
.last b { color: #c01010; font-size: 13px; }
.tag { width: 22px; height: 20px; line-height: 20px; text-align: center; background: #ececec; font-size: 13px; }
.quote em { font-style: normal; width: 71px; padding-right: 20px; text-align: right; color: #b81020; }
.tag.wide { width: 57px; }
.quote em.first { padding: 0 0 0 8px; text-align: left; }
.quote-right { margin-left: auto; display: flex; align-items: center; gap: 2px; }
.quote-right .b { height: 18px; margin-left: 2px; }
.trade { width: 30px; height: 18px; line-height: 15px; border: 1px solid; font-size: 13px; background: #fdf0f0; color: #b82020; }
.sell { background: #f0f4fd; color: #2038a8; }
.mini { display: flex; flex-direction: column; width: 10px; }
.mini button { height: 9px; border: 1px solid #bbb; display: flex; align-items: center; justify-content: center; }
.canvas { flex: 1; min-height: 0; display: flex; }
.plot { flex: 1; min-width: 0; display: block; }
.axis { flex: none; width: 66px; display: block; background: #efefef; }
.t { font: 12px "Noto Sans CJK KR", sans-serif; }
.t13 { font-size: 13px; }
.bold { font-weight: 700; }
.m { font: 10px "DejaVu Sans Mono", monospace; }
.mini-t { font: 7px "DejaVu Sans", sans-serif; }
.scroll { display: flex; height: 15px; border-top: 1px solid #bbb; background: #f6f6f6; }
.raised { width: 17px; border: 1px solid #fff; border-right-color: #777; border-bottom-color: #777; background: #f0f0ee; display: flex; align-items: center; justify-content: center; color: #000; }
.track { flex: 1; display: flex; justify-content: flex-end; }
.thumb { width: 45px; background: #f0f0ee; border: 1px solid #fff; border-right-color: #777; border-bottom-color: #777; }
.play { display: flex; padding-left: 1px; }
.play button { width: 16px; display: flex; align-items: center; justify-content: center; color: #333; }
.play.zoom { padding: 0; }
.play .lit { background: #e6e6e4; outline: 1px solid #ccc; outline-offset: -1px; }
.slide { width: 70px; padding: 0 4px; background: repeating-linear-gradient(90deg, #333 0 1px, transparent 1px 4px) 4px 11px / 60px 3px no-repeat; }
.slide input { display: block; appearance: none; width: 62px; height: 10px; background: linear-gradient(#666, #666) 0 2px / 100% 1px no-repeat; }
.slide input::-webkit-slider-thumb { appearance: none; width: 5px; height: 8px; background: #fff; border: 1px solid #333; border-radius: 0 0 3px 3px; }
.side { flex: none; width: 26px; margin-left: 7px; align-self: flex-start; display: flex; flex-direction: column; background: #fafafa; padding: 1px 2px; color: #333; }
.side button { position: relative; height: 22px; display: flex; flex-direction: column; align-items: center; justify-content: center; overflow: visible; }
.side hr { margin: 0 -2px; border: 0; border-top: 1px solid #c8c8c8; width: 26px; }
.side .active { border: 1px solid #aaa; border-radius: 3px; background: #eee; }
.side small { position: absolute; left: 3px; top: 0; font: 7px/9px "DejaVu Sans Mono", monospace; }
.side .k-autoLine small { top: 11px; }
</style>
